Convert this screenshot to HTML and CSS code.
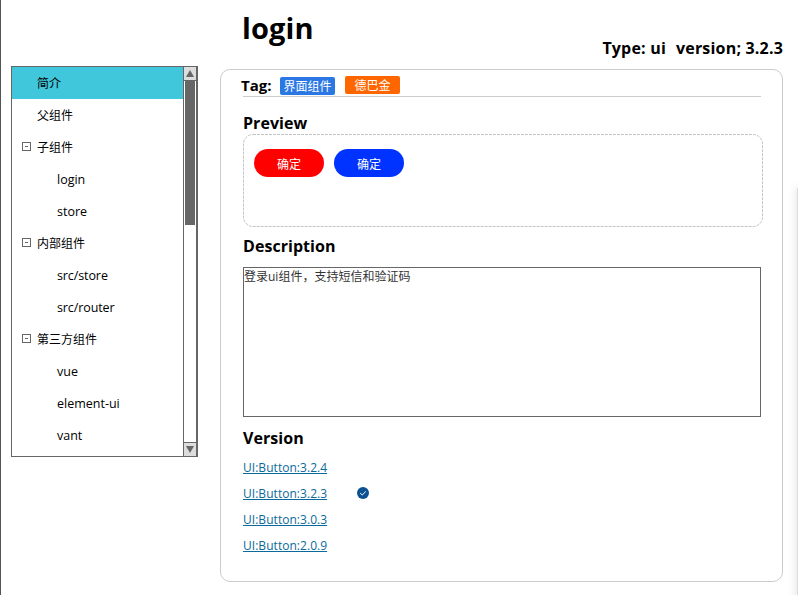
FILE: index.html
```html
<!DOCTYPE html>
<html lang="zh-CN">
<head>
<meta charset="utf-8">
<title>login</title>
<link rel="stylesheet" href="styles.css">
</head>
<body>
<div class="page">
  <nav class="sidebar">
    <ul class="tree">
      <li class="item active">简介</li>
      <li class="item">父组件</li>
      <li class="item group"><i class="toggle"></i>子组件</li>
      <li class="item child">login</li>
      <li class="item child">store</li>
      <li class="item group"><i class="toggle"></i>内部组件</li>
      <li class="item child src">src/store</li>
      <li class="item child src">src/router</li>
      <li class="item group"><i class="toggle"></i>第三方组件</li>
      <li class="item child">vue</li>
      <li class="item child">element-ui</li>
      <li class="item child">vant</li>
    </ul>
    <div class="scrollbar">
      <div class="arrow up"><svg width="8" height="7" viewBox="0 0 8 7"><path d="M4 0 8 7H0Z"/></svg></div>
      <div class="track"><div class="thumb"></div></div>
      <div class="arrow down"><svg width="8" height="7" viewBox="0 0 8 7"><path d="M0 0H8L4 7Z"/></svg></div>
    </div>
  </nav>
  <main class="main">
    <header class="header">
      <h1>login</h1>
      <div class="meta"><span class="type">Type: ui</span><span class="ver">version; 3.2.3</span></div>
    </header>
    <section class="card">
      <div class="tags"><b class="tag-label">Tag:</b><span class="tag blue">界面组件</span><span class="tag orange">德巴金</span></div>
      <h2 class="h-preview">Preview</h2>
      <div class="preview"><svg class="dash" width="520" height="93"><rect x=".5" y=".5" width="519" height="92" rx="9.5"/></svg><button class="btn red">确定</button><button class="btn navy">确定</button></div>
      <h2 class="h-desc">Description</h2>
      <div class="desc">登录ui组件，支持短信和验证码</div>
      <h2 class="h-version">Version</h2>
      <ul class="versions">
        <li><a href="#">UI:Button:3.2.4</a></li>
        <li><a href="#">UI:Button:3.2.3</a><svg class="check" width="12" height="12" viewBox="0 0 12 12"><circle cx="6" cy="6" r="6"/><path d="M3.2 6.1 5.2 8 8.8 4.5"/></svg></li>
        <li><a href="#">UI:Button:3.0.3</a></li>
        <li><a href="#">UI:Button:2.0.9</a></li>
      </ul>
    </section>
  </main>
  <div class="edge"></div>
</div>
</body>
</html>
```
FILE: styles.css
```css
* { box-sizing: border-box; }
body { margin: 0; background: #fff; color: #000; font: 13px/32px "Open Sans", "Noto Sans CJK SC", sans-serif; }
ul { list-style: none; margin: 0; padding: 0; }
h1, h2 { margin: 0; }
.page { position: relative; display: flex; align-items: flex-start; width: 798px; height: 595px; overflow: hidden; border-left: 1px solid #555; }
.sidebar { display: flex; flex: none; width: 187px; height: 391px; margin: 66px 0 0 10px; border: 1px solid #666; border-right-width: 2px; }
.tree { flex: 1; overflow: hidden; }
.item { position: relative; display: flex; align-items: center; height: 32px; padding: 2px 0 0 25px; font-size: 12px; white-space: nowrap; }
.active { background: #40c7db; }
.group { padding-left: 10px; }
.toggle { width: 9px; height: 9px; margin: -3px 6px 0 0; border: 1px solid #666; background: linear-gradient(#666, #666) center / 3px 1px no-repeat; }
.child { padding: 2px 0 0 45px; font-size: 12.5px; }
.src { letter-spacing: -.1px; }
.scrollbar { display: flex; flex-direction: column; width: 13px; border-left: 1px solid #666; }
.arrow { display: flex; align-items: center; justify-content: center; height: 14px; background: #ddd; }
.arrow svg { fill: #666; }
.up { border-bottom: 1px solid #666; }
.down { border-top: 1px solid #666; }
.track { flex: 1; padding: 0 1px; }
.thumb { height: 144px; background: #666; }
.main { width: 563px; margin-left: 22px; }
.header { display: flex; justify-content: space-between; height: 69px; padding-left: 22px; }
h1 { font-size: 29px; line-height: 40px; margin-top: 8px; letter-spacing: .1px; }
.meta { display: flex; gap: 10px; padding-top: 36px; font-size: 16px; line-height: 24px; font-weight: 700; letter-spacing: .19px; white-space: nowrap; }
.card { width: 563px; height: 513px; padding: 6px 20px 0 22px; border: 1px solid #ccc; border-radius: 10px; }
.tags { display: flex; align-items: flex-start; width: 518px; height: 21px; border-bottom: 1px solid #ccc; }
.tag-label { width: 37px; margin-left: -2px; margin-right: 2px; font-size: 15px; line-height: 19px; }
.tag { width: 55px; height: 18px; border-radius: 2px; font-size: 12px; line-height: 19px; text-align: center; color: #fff; white-space: nowrap; }
.blue { margin-top: 1px; background: #2b78e4; }
.orange { margin-left: 10px; background: #ff6600; }
h2 { font-size: 16px; line-height: 22px; letter-spacing: .05px; }
.h-preview { margin-top: 15px; }
.preview { position: relative; display: flex; gap: 10px; width: 520px; height: 93px; padding: 15px 11px; }
.dash { position: absolute; inset: 0; fill: none; stroke: #c4c4c4; stroke-dasharray: 3 1; }
.btn { width: 70px; height: 28px; padding: 0; border: 0; border-radius: 14px; color: #fff; font: 12px/27px "Noto Sans CJK SC", sans-serif; }
.red { background: #f00; }
.navy { background: #03f; }
.h-desc { margin-top: 8px; }
.desc { width: 518px; height: 150px; margin-top: 10px; border: 1px solid #666; font-size: 12px; line-height: 18px; color: #333; }
.h-version { margin-top: 10px; }
.versions { margin-top: 6px; }
.versions li { display: flex; align-items: center; height: 26px; }
.versions a { width: 84px; font-size: 12px; letter-spacing: .04px; line-height: 26px; color: #0b6a99; white-space: nowrap; }
.check { margin: -2px 0 0 30px; fill: #0a5093; }
.check path { fill: none; stroke: #fff; stroke-width: 1; }
.edge { position: absolute; left: 796px; top: 188px; width: 10px; height: 430px; background: #ddd; box-shadow: 0 0 10px rgba(0,0,0,.13); }
```
